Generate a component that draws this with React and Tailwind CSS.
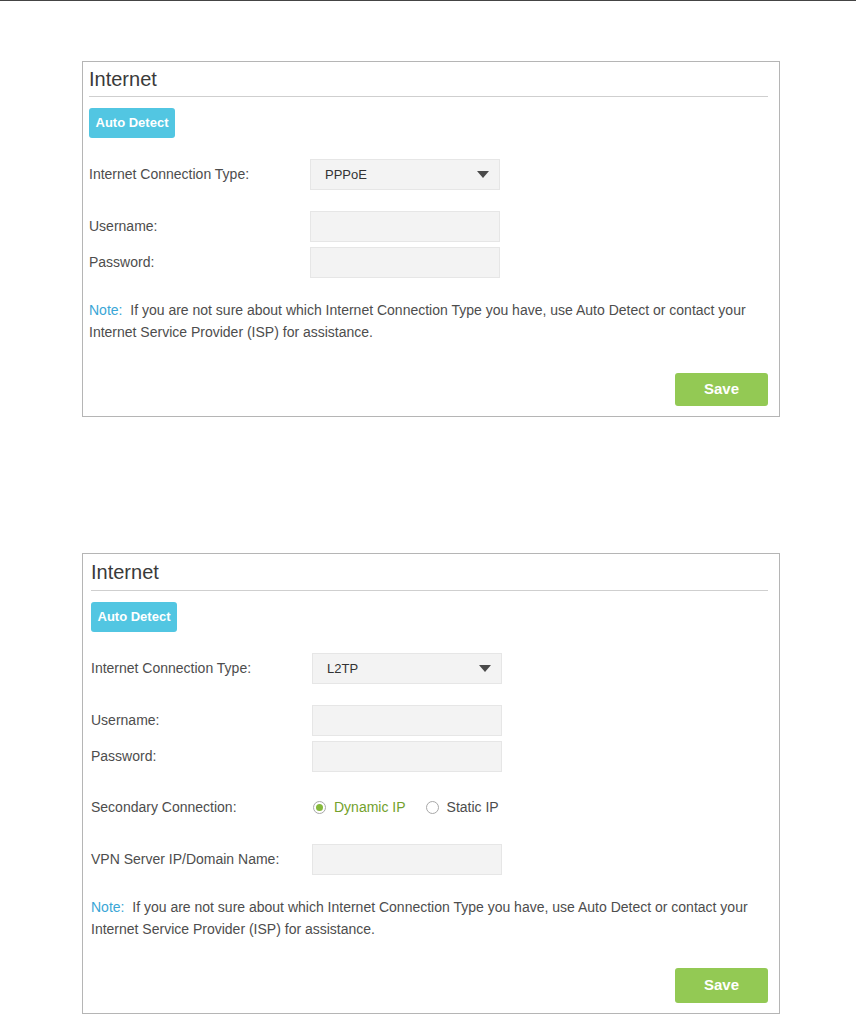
import React from "react";

const font = { fontFamily: '"Liberation Sans", Arial, sans-serif' };

function Label({ children }) {
  return (
    <div className="w-[221px] shrink-0 text-[14px] text-[#4d4d4d]">{children}</div>
  );
}

function Input({ h }) {
  return <div className={"w-[190px] border border-[#e6e6e6] bg-[#f3f3f3] " + h} />;
}

function Select({ value, h }) {
  return (
    <div className={"flex w-[190px] items-center justify-between border border-[#e6e6e6] bg-[#f3f3f3] pl-[14px] pr-[10px] " + h}>
      <span className="text-[13px] text-[#333]">{value}</span>
      <svg width="12" height="7" viewBox="0 0 12 7">
        <path d="M0 0 L12 0 L6 7 Z" fill="#4a4a4a" />
      </svg>
    </div>
  );
}

function Radio({ checked, label }) {
  return (
    <div className="flex items-center gap-[8px]">
      <span className="flex h-[13px] w-[13px] items-center justify-center rounded-full border border-[#a8a8a8] bg-white">
        {checked && <span className="h-[7px] w-[7px] rounded-full bg-[#86b93c]" />}
      </span>
      <span className={"text-[14px] " + (checked ? "text-[#73a12c]" : "text-[#4d4d4d]")}>{label}</span>
    </div>
  );
}

function Note() {
  return (
    <div className="text-[14px] leading-[22px] text-[#4d4d4d]">
      <span className="text-[#3aa6d6]">Note:</span>&nbsp; If you are not sure about which Internet Connection Type you have, use Auto Detect or contact your
      <br />
      Internet Service Provider (ISP) for assistance.
    </div>
  );
}

function Panel({ pl, children }) {
  return (
    <div className={"ml-[82px] w-[698px] border border-[#b5b5b5] bg-white pr-[11px] " + pl}>
      {children}
    </div>
  );
}

function AutoDetect() {
  return (
    <div className="mt-[11px] flex h-[30px] w-[86px] items-center justify-center rounded-[3px] bg-[#52c6e2] text-[13px] font-bold text-white">Auto Detect</div>
  );
}

export default function App() {
  return (
    <div className="min-h-[1016px] w-[856px] border-t border-[#444] bg-white" style={font}>
      <div className="pt-[60px]">
        <Panel pl="pl-[6px] pb-[10px]">
          <div className="flex h-[35px] items-center border-b border-[#cfcfcf] text-[20px] text-[#3a3a3a]">Internet</div>
          <AutoDetect />
          <div className="mt-[21px] flex items-center">
            <Label>Internet Connection Type:</Label>
            <Select value="PPPoE" h="h-[31px]" />
          </div>
          <div className="mt-[21px] flex items-center">
            <Label>Username:</Label>
            <Input h="h-[31px]" />
          </div>
          <div className="mt-[5px] flex items-center">
            <Label>Password:</Label>
            <Input h="h-[31px]" />
          </div>
          <div className="mt-[21px]">
            <Note />
          </div>
          <div className="mt-[30px] flex justify-end">
            <div className="flex h-[33px] w-[93px] items-center justify-center rounded-[3px] bg-[#93c954] text-[15px] font-bold text-white">Save</div>
          </div>
        </Panel>
      </div>
      <div className="pt-[136px]">
        <Panel pl="pl-[8px] pb-[10px]">
          <div className="flex h-[37px] items-center border-b border-[#cfcfcf] text-[20px] text-[#3a3a3a]">Internet</div>
          <AutoDetect />
          <div className="mt-[21px] flex items-center">
            <Label>Internet Connection Type:</Label>
            <Select value="L2TP" h="h-[31px]" />
          </div>
          <div className="mt-[21px] flex items-center">
            <Label>Username:</Label>
            <Input h="h-[31px]" />
          </div>
          <div className="mt-[5px] flex items-center">
            <Label>Password:</Label>
            <Input h="h-[31px]" />
          </div>
          <div className="mt-[20px] flex h-[31px] items-center">
            <Label>Secondary Connection:</Label>
            <div className="flex items-center gap-[20px] pl-[1px]">
              <Radio checked label="Dynamic IP" />
              <Radio label="Static IP" />
            </div>
          </div>
          <div className="mt-[21px] flex items-center">
            <Label>VPN Server IP/Domain Name:</Label>
            <Input h="h-[31px]" />
          </div>
          <div className="mt-[21px]">
            <Note />
          </div>
          <div className="mt-[28px] flex justify-end">
            <div className="flex h-[35px] w-[93px] items-center justify-center rounded-[3px] bg-[#93c954] text-[15px] font-bold text-white">Save</div>
          </div>
        </Panel>
      </div>
    </div>
  );
}
